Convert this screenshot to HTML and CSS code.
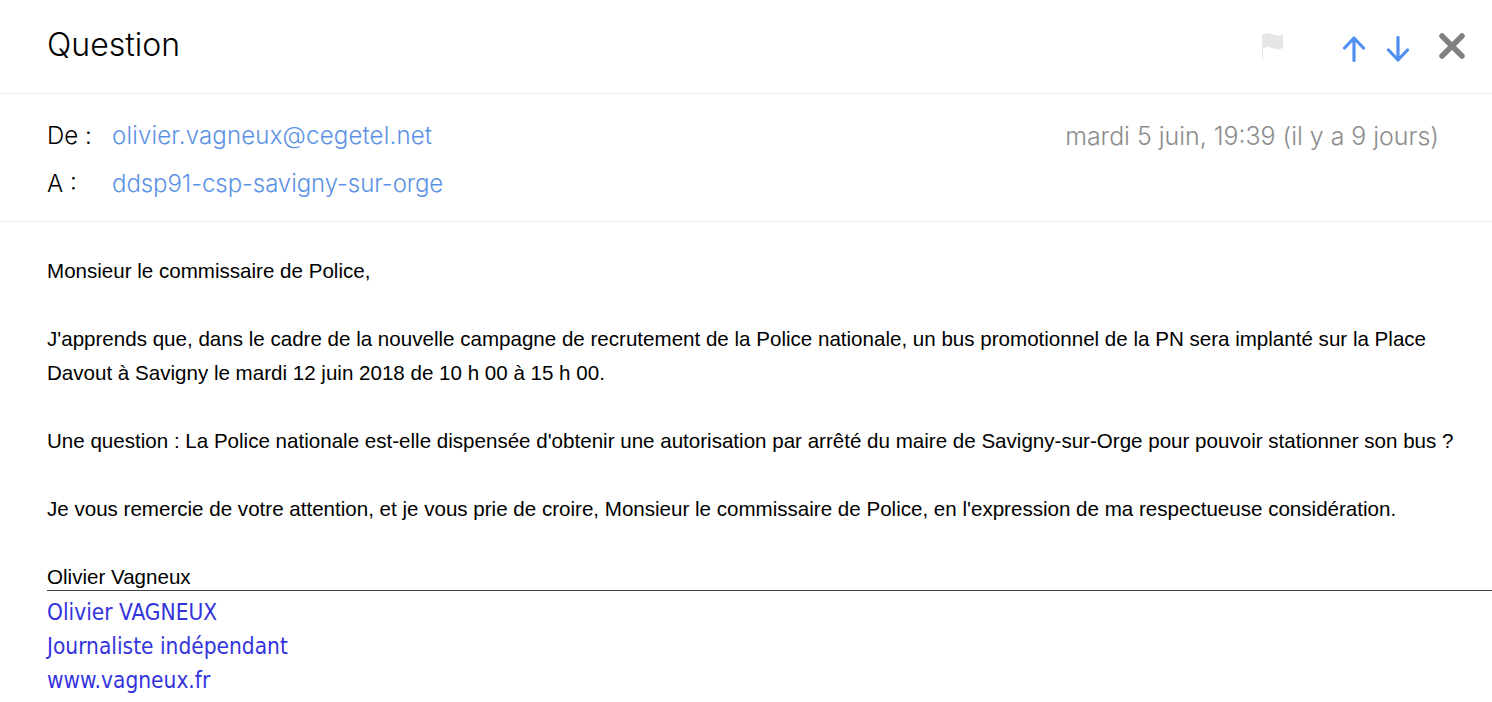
FILE: index.html
```html
<!DOCTYPE html>
<html lang="fr">
<head>
  <meta charset="UTF-8" />
  <title>Question</title>
  <link rel="stylesheet" href="styles.css">
</head>
<body>

  <div class="subject-bar">
    <h1>Question</h1>
    <div class="actions">
      <svg class="flag" width="24" height="28" viewBox="0 0 24 28">
        <path d="M2 3C6 0.500 9 1 13 2.500S19 4 23 2.500V16C19 18 16 17.500 12 16S6 15 3 16.500V28H2Z" fill="#e6e6e6"/>
      </svg>
      <svg class="arrow-up" width="24" height="26" viewBox="0 0 24 26">
        <path d="M12 24.500V2M2.500 12L12 2L21.500 12" fill="none" stroke="#4f8ff2" stroke-width="3.200" stroke-linecap="round" stroke-linejoin="round"/>
      </svg>
      <svg class="arrow-down" width="24" height="26" viewBox="0 0 24 26">
        <path d="M12 1.500V24M2.500 14L12 24L21.500 14" fill="none" stroke="#4f8ff2" stroke-width="3.200" stroke-linecap="round" stroke-linejoin="round"/>
      </svg>
      <svg class="close" width="28" height="28" viewBox="0 0 28 28">
        <path d="M4 4L24 24M24 4L4 24" fill="none" stroke="#808080" stroke-width="5.500" stroke-linecap="round"/>
      </svg>
    </div>
  </div>

  <div class="meta">
    <div class="meta-row">
      <span class="meta-label">De :</span>
      <a class="meta-link meta-from">olivier.vagneux@cegetel.net</a>
      <span class="meta-date">mardi 5 juin, 19:39 (il y a 9 jours)</span>
    </div>
    <div class="meta-row meta-row-to">
      <span class="meta-label">A :</span>
      <a class="meta-link meta-to">ddsp91-csp-savigny-sur-orge</a>
    </div>
  </div>

  <div class="message">
    <p>Monsieur le commissaire de Police,</p>
    <p>J'apprends que, dans le cadre de la nouvelle campagne de recrutement de la Police nationale, un bus promotionnel de la PN sera implanté sur la Place<br>Davout à Savigny le mardi 12 juin 2018 de 10 h 00 à 15 h 00.</p>
    <p>Une question : La Police nationale est-elle dispensée d'obtenir une autorisation par arrêté du maire de Savigny-sur-Orge pour pouvoir stationner son bus ?</p>
    <p>Je vous remercie de votre attention, et je vous prie de croire, Monsieur le commissaire de Police, en l'expression de ma respectueuse considération.</p>
    <p class="sender">Olivier Vagneux</p>
  </div>

  <div class="signature">
    <div>Olivier VAGNEUX</div>
    <div>Journaliste indépendant</div>
    <div>www.vagneux.fr</div>
  </div>

</body>
</html>
```

FILE: styles.css
```css
* {
  box-sizing: border-box;
}

body {
  margin: 0;
  background: #fff;
  color: #000;
  font-family: Inter, sans-serif;
  overflow: hidden;
}

.subject-bar {
  display: flex;
  justify-content: space-between;
  align-items: center;
  height: 94px;
  padding: 0 26px 4px 47px;
  border-bottom: 1px solid #ededed;
}

.subject-bar h1 {
  margin: 0;
  font-size: 32px;
  font-weight: 300;
}

.actions {
  display: flex;
  align-items: center;
}

.flag {
  margin-top: 2px;
  margin-right: 58px;
}

.arrow-up {
  margin-right: 20px;
  margin-top: 8px;
}

.arrow-down {
  margin-right: 28px;
  margin-top: 8px;
}

.close {
  margin-top: 2px;
}

.meta {
  height: 128px;
  padding: 18px 53px 0 47px;
  border-bottom: 1px solid #ededed;
}

.meta-row {
  display: flex;
  align-items: center;
  height: 47px;
  font-size: 24px;
  font-weight: 300;
}

.meta-row-to {
  padding-top: 2px;
}

.meta-label {
  width: 65px;
}

.meta-link {
  color: #5b92e5;
}

.meta-from {
  letter-spacing: 0.18px;
}

.meta-to {
  letter-spacing: -0.07px;
}

.meta-date {
  margin-left: auto;
  color: #8c8c8c;
  font-size: 24.900px;
}

.message {
  padding: 32px 0 0 47px;
  font-family: "Liberation Sans", sans-serif;
  font-size: 20.570px;
  line-height: 34px;
}

.message p {
  margin: 0 0 34px;
}

.message .sender {
  margin: 0;
  height: 30px;
}

.signature {
  margin-left: 47px;
  padding-top: 4px;
  border-top: 1px solid #444;
  color: #3333dd;
  font-family: "DejaVu Sans", sans-serif;
  font-stretch: condensed;
  font-size: 22.500px;
  line-height: 34px;
}
```
